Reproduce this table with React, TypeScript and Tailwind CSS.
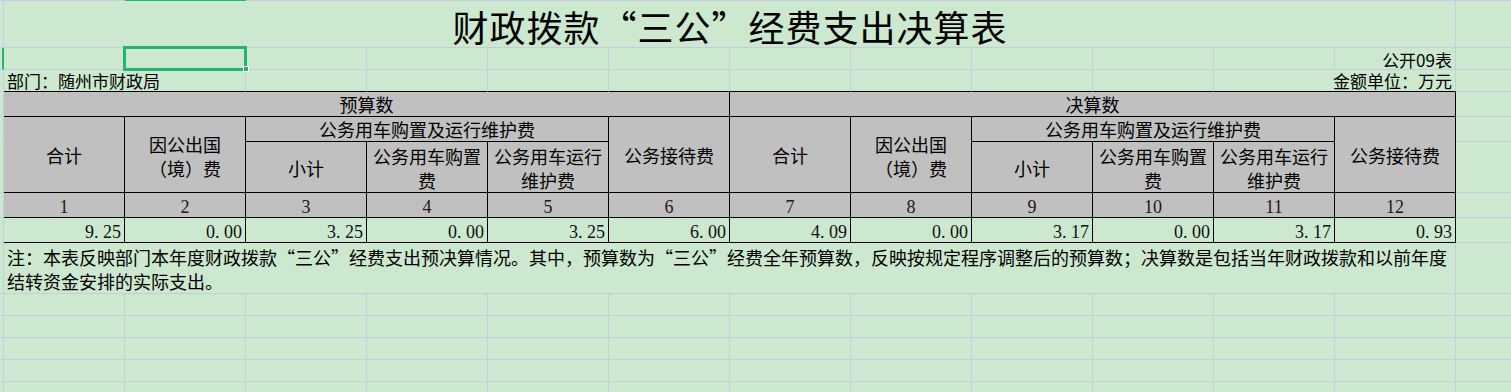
import React from "react";

// sheet gridline / table border pieces
const LR = "border-r border-r-[#c7cbe0]";
const LB = "border-b border-b-[#c7cbe0]";
const KR = "border-r border-r-black";
const KB = "border-b border-b-black";

const CJK = "font-['Noto_Sans_CJK_SC','Noto_Sans',sans-serif]";
const SERIF = "font-['Liberation_Serif','Noto_Sans_CJK_SC',serif]";

const HEAD = `${KR} ${KB} bg-[#c0c0c0] flex flex-col items-center justify-center text-center text-[18px] leading-[24px] whitespace-nowrap`;

const budget = ["9.25", "0.00", "3.25", "0.00", "3.25", "6.00"];
const actual = ["4.09", "0.00", "3.17", "0.00", "3.17", "0.93"];

function Amount({ v }: { v: string }) {
  const [whole, dec] = v.split(".");
  return (
    <>
      {whole}
      <span className="inline-block w-[9px] text-left">.</span>
      {dec}
    </>
  );
}

// row 1 of the header block: 合计 / 因公出国 / 公务用车… / 公务接待费
function TopHalf() {
  return (
    <>
      <div className={`row-span-2 ${HEAD}`}>合计</div>
      <div className={`row-span-2 pt-[3px] ${HEAD}`}>
        <span>因公出国</span>
        <span>（境）费</span>
      </div>
      <div className={`col-span-3 ${HEAD}`}>公务用车购置及运行维护费</div>
      <div className={`row-span-2 ${HEAD}`}>公务接待费</div>
    </>
  );
}

function SubHalf() {
  return (
    <>
      <div className={`pt-[2px] ${HEAD}`}>小计</div>
      <div className={`pt-[1px] ${HEAD}`}>
        <span>公务用车购置</span>
        <span>费</span>
      </div>
      <div className={`pt-[1px] ${HEAD}`}>
        <span>公务用车运行</span>
        <span>维护费</span>
      </div>
    </>
  );
}

export default function App() {
  const blankRows = [0, 1, 2, 3, 4];
  const cols = Array.from({ length: 12 }, (_, i) => i);

  return (
    <div className={`w-[1511px] h-[392px] overflow-hidden bg-[#cce8cf] text-black ${CJK}`}>
      <div className="grid grid-cols-[4px_repeat(12,121px)_1fr] grid-rows-[1px_47px_22px_22px_25px_25px_51px_25px_25px_51px_22px_22px_22px_22px_22px]">
        {/* column header edge, B highlighted */}
        <div className="col-span-2 bg-[#c7cbe0]" />
        <div className="bg-[#22b573]" />
        <div className="col-span-11 bg-[#c7cbe0]" />

        {/* title */}
        <div className={`${LR} ${LB}`} />
        <div className={`col-span-12 ${LR} ${LB} flex items-center justify-center pt-[3px] pl-[1px] text-[36px] leading-none tracking-[1px] whitespace-nowrap`}>
          财政拨款“三公”经费支出决算表
        </div>
        <div className={LB} />

        {/* 公开09表 row, with the active cell in B */}
        <div className={`border-r-2 border-r-[#22b573] ${LB}`} />
        <div className={`${LR} ${LB}`} />
        <div className={`${LR} ${LB} relative`}>
          <div className="absolute left-[-2px] top-[-2px] w-[124px] h-[25px] border-[3px] border-[#22b573] z-10" />
          <div className="absolute left-[118px] top-[18px] w-[6px] h-[6px] bg-[#22b573] border border-white z-20" />
        </div>
        {cols.slice(0, 9).map((c) => (
          <div key={c} className={`${LR} ${LB}`} />
        ))}
        <div className={`${LR} ${LB} flex items-center justify-end pr-[3px] pt-[2px] text-[17px] leading-[18px] whitespace-nowrap`}>
          公开09表
        </div>
        <div className={LB} />

        {/* 部门 / 金额单位 row */}
        <div className={`${LR} ${LB}`} />
        <div className={`col-span-2 ${LR} ${KB} flex items-center pl-[3px] pt-[1px] text-[17px] leading-[18px] whitespace-nowrap`}>
          部门：随州市财政局
        </div>
        {cols.slice(0, 8).map((c) => (
          <div key={c} className={`${LR} ${KB}`} />
        ))}
        <div className={`col-span-2 ${LR} ${KB} flex items-center justify-end pr-[3px] pt-[1px] text-[17px] leading-[18px] whitespace-nowrap`}>
          金额单位：万元
        </div>
        <div className={LB} />

        {/* 预算数 / 决算数 */}
        <div className={`${LR} ${LB}`} />
        <div className={`col-span-6 ${HEAD}`}>预算数</div>
        <div className={`col-span-6 ${HEAD}`}>决算数</div>
        <div className={LB} />

        {/* category headers */}
        <div className={`${LR} ${LB}`} />
        <TopHalf />
        <TopHalf />
        <div className={LB} />

        <div className={`${LR} ${LB}`} />
        <SubHalf />
        <SubHalf />
        <div className={LB} />

        {/* column numbers */}
        <div className={`${LR} ${LB}`} />
        {cols.map((c) => (
          <div key={c} className={`${KR} ${KB} bg-[#c0c0c0] flex items-center justify-center pt-[4px] ${SERIF} text-[18px] leading-[24px] text-[#2a1414]`}>
            {c + 1}
          </div>
        ))}
        <div className={LB} />

        {/* amounts */}
        <div className={`${LR} ${LB}`} />
        {[...budget, ...actual].map((v, i) => (
          <div key={i} className={`${KR} ${KB} flex items-center justify-end pr-[3px] pt-[3px] ${SERIF} text-[18px] leading-[24px] text-[#111]`}>
            <Amount v={v} />
          </div>
        ))}
        <div className={LB} />

        {/* footnote */}
        <div className={`${LR} ${LB}`} />
        <div className={`col-span-12 ${LR} ${LB} flex flex-col pl-[3px] pt-[2px] text-[18px] leading-[24px] whitespace-nowrap`}>
          <span>注：本表反映部门本年度财政拨款“三公”经费支出预决算情况。其中，预算数为“三公”经费全年预算数，反映按规定程序调整后的预算数；决算数是包括当年财政拨款和以前年度</span>
          <span>结转资金安排的实际支出。</span>
        </div>
        <div className={LB} />

        {/* empty sheet rows */}
        {blankRows.map((r) => (
          <React.Fragment key={r}>
            <div className={`${LR} ${LB}`} />
            {cols.map((c) => (
              <div key={c} className={`${LR} ${LB}`} />
            ))}
            <div className={LB} />
          </React.Fragment>
        ))}
      </div>
    </div>
  );
}
